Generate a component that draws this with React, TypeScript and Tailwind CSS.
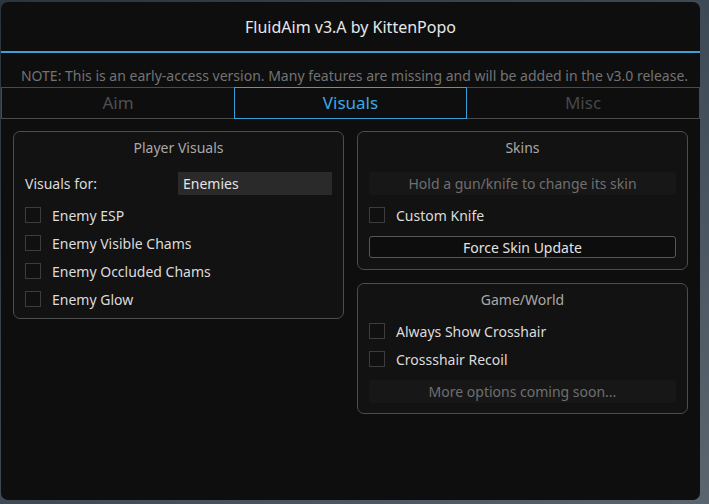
const font = { fontFamily: '"Noto Sans", "Open Sans", sans-serif' };

function Check({ label }: { label: string }) {
  return (
    <div className="flex items-center h-[28px]">
      <span className="w-[16px] h-[16px] border border-[#3c3c3c] bg-[#101010]" />
      <span className="ml-[11px] text-[14px] text-[#dcdcdc]">{label}</span>
    </div>
  );
}

function Panel({ title, children }: { title: string; children: React.ReactNode }) {
  return (
    <div className="rounded-[7px] border border-[#4d4d4d] bg-[#121212] px-[11px] pb-[5px]">
      <div className="h-[30px] flex items-center justify-center text-[14px] text-[#a9a9a9]">{title}</div>
      {children}
    </div>
  );
}

function InfoBox({ text }: { text: string }) {
  return (
    <div className="h-[23px] rounded-[3px] bg-[#171717] flex items-center justify-center text-[14px] text-[#6f6f6f]">
      {text}
    </div>
  );
}

export default function App() {
  return (
    <div
      className="w-[709px] h-[504px] pt-[2px] pl-[1px] pr-[9px] pb-[4px] bg-gradient-to-br from-[#2a3540] via-[#3d4a56] to-[#5b6570]"
      style={font}
    >
      <div className="h-full rounded-[7px] bg-[#0e0e0f] flex flex-col">
        <div className="h-[49px] flex items-center justify-center text-[16px] text-[#e8e8e8]">
          FluidAim v3.A by KittenPopo
        </div>
        <div className="h-[2px] bg-[#3c9fd6]" />
        <div className="h-[34px] flex items-end justify-center text-[14px] text-[#737373] pb-[1px] pl-[8px]">
          NOTE: This is an early-access version. Many features are missing and will be added in the v3.0 release.
        </div>
        <div className="grid grid-cols-3 h-[32px] text-[17px]">
          <div className="border border-r-0 border-[#4a4a4a] flex items-center justify-center text-[#4f4f4f]">Aim</div>
          <div className="border border-[#3a9fd8] flex items-center justify-center text-[#3ba8e6]">Visuals</div>
          <div className="border border-l-0 border-[#4a4a4a] flex items-center justify-center text-[#474747]">Misc</div>
        </div>
        <div className="grid grid-cols-2 gap-[13px] px-[12px] pt-[12px] items-start">
          <Panel title="Player Visuals">
            <div className="flex items-center justify-between mt-[10px] mb-[6px]">
              <span className="text-[14px] text-[#dcdcdc]">Visuals for:</span>
              <div className="w-[154px] h-[23px] bg-[#2a2a2a] flex items-center px-[5px] text-[14px] text-[#e4e4e4]">Enemies</div>
            </div>
            <Check label="Enemy ESP" />
            <Check label="Enemy Visible Chams" />
            <Check label="Enemy Occluded Chams" />
            <Check label="Enemy Glow" />
          </Panel>
          <div className="flex flex-col gap-[13px]">
            <Panel title="Skins">
              <div className="mt-[10px] mb-[6px]">
                <InfoBox text="Hold a gun/knife to change its skin" />
              </div>
              <Check label="Custom Knife" />
              <div className="mt-[7px] mb-[6px] h-[22px] rounded-[3px] border border-[#575757] bg-[#0d0d0d] flex items-center justify-center text-[14px] text-[#e2e2e2]">
                Force Skin Update
              </div>
            </Panel>
            <Panel title="Game/World">
              <div className="mt-[3px]">
                <Check label="Always Show Crosshair" />
                <Check label="Crossshair Recoil" />
              </div>
              <div className="mt-[7px] mb-[5px]">
                <InfoBox text="More options coming soon..." />
              </div>
            </Panel>
          </div>
        </div>
      </div>
    </div>
  );
}
